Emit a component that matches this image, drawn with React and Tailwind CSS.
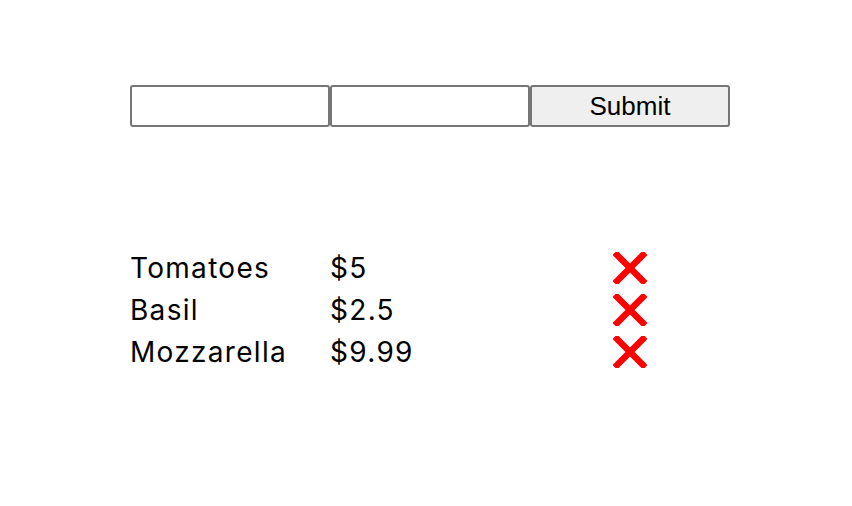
import React, { useState } from "react";

const CrossIcon = () => (
  <svg width="34" height="32" viewBox="0 0 34 32" className="block">
    <path d="M4 3 L30 29 M30 3 L4 29" stroke="#ff0000" strokeWidth="6.5" strokeLinecap="square" />
  </svg>
);

const App = () => {
  const [items] = useState([
    { name: "Tomatoes", price: "$5" },
    { name: "Basil", price: "$2.5" },
    { name: "Mozzarella", price: "$9.99" },
  ]);

  return (
    <div className="w-[852px] h-[506px] bg-white font-['Liberation_Sans',Arial,sans-serif] text-black">
      <div className="pl-[130px] pt-[85px]">
        <form className="flex" onSubmit={(e) => e.preventDefault()}>
          <input
            type="text"
            className="w-[200px] h-[42px] border-2 border-[#767676] rounded-[3px] bg-white px-1 outline-none"
          />
          <input
            type="text"
            className="w-[200px] h-[42px] border-2 border-[#767676] rounded-[3px] bg-white px-1 outline-none"
          />
          <button
            type="submit"
            className="w-[200px] h-[42px] border-2 border-[#767676] rounded-[3px] bg-[#efefef] text-[26px] leading-none"
          >
            Submit
          </button>
        </form>

        <div className="mt-[120px] flex flex-col font-['Inter',sans-serif]">
          {items.map((item) => (
            <div key={item.name} className="grid grid-cols-[200px_200px_200px] h-[42px] items-center text-[28px] tracking-[1.3px]">
              <span>{item.name}</span>
              <span>{item.price}</span>
              <span className="flex justify-center">
                <CrossIcon />
              </span>
            </div>
          ))}
        </div>
      </div>
    </div>
  );
};

export default App;
